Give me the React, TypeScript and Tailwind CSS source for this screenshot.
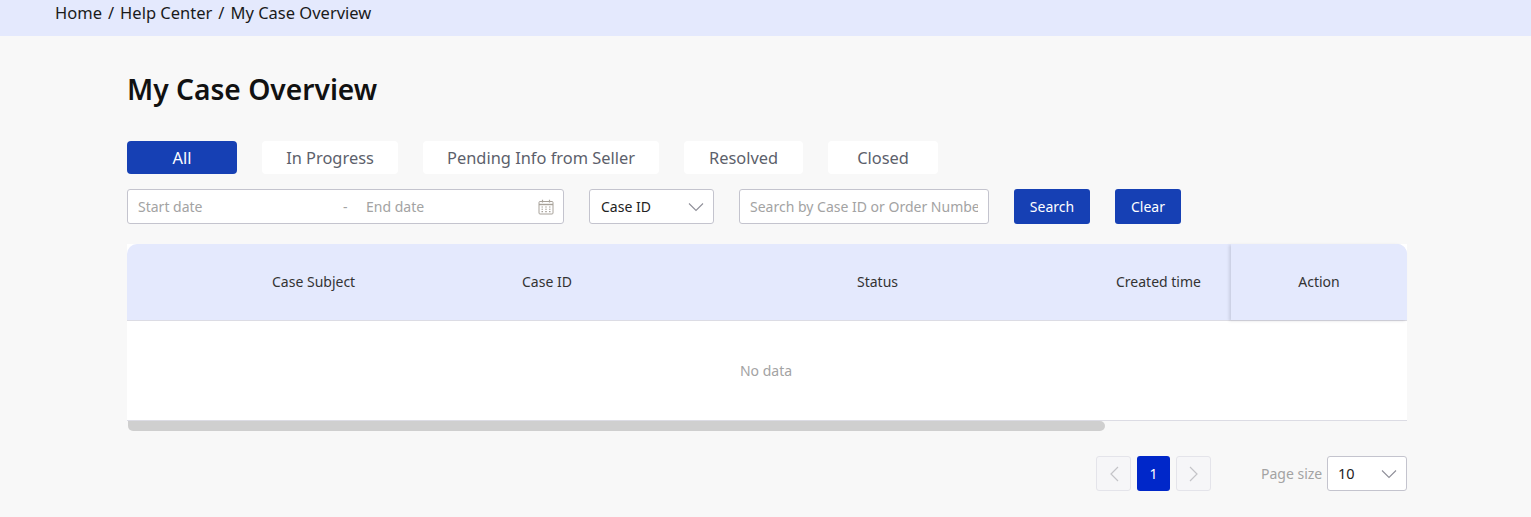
import React from "react";

const Chevron = ({ className = "" }: { className?: string }) => (
  <svg width="16" height="10" viewBox="0 0 16 10" fill="none" className={className}>
    <path d="M1 1.5 L8 8.5 L15 1.5" stroke="#8f8f99" strokeWidth="1.1" />
  </svg>
);

const Calendar = () => (
  <svg width="16" height="16" viewBox="0 0 16 16" fill="none">
    <rect x="1" y="2.5" width="14" height="12.5" rx="1" stroke="#a8a29a" strokeWidth="1" />
    <path d="M1 5.5H15" stroke="#a8a29a" strokeWidth="1.4" />
    <path d="M4.5 0.8V3.5M11.5 0.8V3.5" stroke="#a8a29a" strokeWidth="1.2" />
    <path d="M3.5 8H5M7.2 8H8.8M11 8H12.5M3.5 10.3H5M7.2 10.3H8.8M11 10.3H12.5M3.5 12.6H5M7.2 12.6H8.8M11 12.6H12.5" stroke="#a8a29a" strokeWidth="1.1" />
  </svg>
);

const tabs = [
  { label: "In Progress", w: "w-[136px]" },
  { label: "Pending Info from Seller", w: "w-[236px]" },
  { label: "Resolved", w: "w-[119px]" },
  { label: "Closed", w: "w-[110px]" },
];

export default function App() {
  return (
    <div className="min-h-[517px] h-[517px] overflow-hidden bg-[#f8f8f8] font-['Noto_Sans','Open_Sans',sans-serif] text-[#111]">
      <div className="h-[36px] bg-[#e4e9fd] pl-[55px] text-[16.5px] leading-[26px] text-[#1a1a1a] flex gap-[6px]">
        <span>Home</span>
        <span>/</span>
        <span>Help Center</span>
        <span>/</span>
        <span>My Case Overview</span>
      </div>

      <div className="w-[1280px] ml-[127px]">
        <h1 className="mt-[32px] h-[42px] text-[28.2px] leading-[42px] font-semibold text-[#111]">My Case Overview</h1>

        <div className="mt-[31px] flex gap-[25px] h-[33px]">
          <div className="w-[110px] pt-px rounded-[4px] bg-[#1640b4] text-white flex items-center justify-center text-[16.4px]">All</div>
          {tabs.map((t) => (
            <div key={t.label} className={`${t.w} pt-px rounded-[4px] bg-white text-[#5c5f6b] flex items-center justify-center text-[16.4px]`}>
              {t.label}
            </div>
          ))}
        </div>

        <div className="mt-[15px] flex gap-[25px] h-[35px] text-[14px]">
          <div className="w-[437px] rounded-[3px] border border-[#c4c4ce] bg-white flex items-center pl-[10px] pr-[9px] text-[#a3a3a3]">
            <span className="w-[205px]">Start date</span>
            <span className="w-[23px]">-</span>
            <span className="flex-1">End date</span>
            <Calendar />
          </div>
          <div className="w-[125px] rounded-[3px] border border-[#c4c4ce] bg-white flex items-center justify-between pl-[11px] pr-[9px] text-[#222]">
            <span>Case ID</span>
            <Chevron />
          </div>
          <div className="w-[250px] rounded-[3px] border border-[#c4c4ce] bg-white flex items-center pl-[10px] pr-[10px] text-[#a3a3a3] overflow-hidden">
            <span className="whitespace-nowrap overflow-hidden">Search by Case ID or Order Number</span>
          </div>
          <div className="w-[76px] rounded-[3px] bg-[#1640b4] text-white flex items-center justify-center">Search</div>
          <div className="w-[66px] rounded-[3px] bg-[#1640b4] text-white flex items-center justify-center">Clear</div>
        </div>

        <div className="mt-[20px] bg-white">
          <div className="h-[77px] grid grid-cols-[395px_335px_259px_115px_176px] bg-[#e4e9fd] rounded-t-[10px] border-b border-[#dcdce4] text-[14px] text-[#333] items-stretch">
            <div className="pl-[145px] pb-[2px] flex items-center">Case Subject</div>
            <div className="pb-[2px] flex items-center">Case ID</div>
            <div className="pb-[2px] flex items-center">Status</div>
            <div className="pb-[2px] flex items-center whitespace-nowrap">Created time</div>
            <div className="pb-[2px] flex items-center justify-center rounded-tr-[10px] bg-[#e4e9fd] shadow-[-2px_1px_3px_rgba(70,70,90,0.16)]">Action</div>
          </div>
          <div className="h-[100px] flex items-center justify-center text-[14px] text-[#a3a3a3] border-b border-[#dcdce4] pr-[2px]">No data</div>
        </div>
        <div className="h-[10px] w-[977px] ml-px rounded-r-full rounded-bl-full bg-[#cfcfcf]" />

        <div className="mt-[25px] h-[35px] flex items-stretch text-[14px]">
          <div className="ml-[969px] w-[35px] rounded-[3px] border border-[#e4e4ea] bg-[#f6f6f8] flex items-center justify-center">
            <svg width="12" height="16" viewBox="0 0 12 16" fill="none"><path d="M10 1 L3 8 L10 15" stroke="#c4c4c8" strokeWidth="1.2" /></svg>
          </div>
          <div className="ml-[6px] w-[33px] rounded-[3px] bg-[#0027c9] text-white flex items-center justify-center">1</div>
          <div className="ml-[6px] w-[35px] rounded-[3px] border border-[#e4e4ea] bg-[#f6f6f8] flex items-center justify-center">
            <svg width="12" height="16" viewBox="0 0 12 16" fill="none"><path d="M2 1 L9 8 L2 15" stroke="#c4c4c8" strokeWidth="1.2" /></svg>
          </div>
          <div className="ml-[50px] w-[66px] flex items-center text-[#a3a3a3] whitespace-nowrap">Page size</div>
          <div className="w-[80px] rounded-[3px] border border-[#c4c4ce] bg-white flex items-center justify-between pl-[10px] pr-[9px] text-[#222]">
            <span className="text-[14.5px] pt-px">10</span>
            <Chevron />
          </div>
        </div>
      </div>
    </div>
  );
}
